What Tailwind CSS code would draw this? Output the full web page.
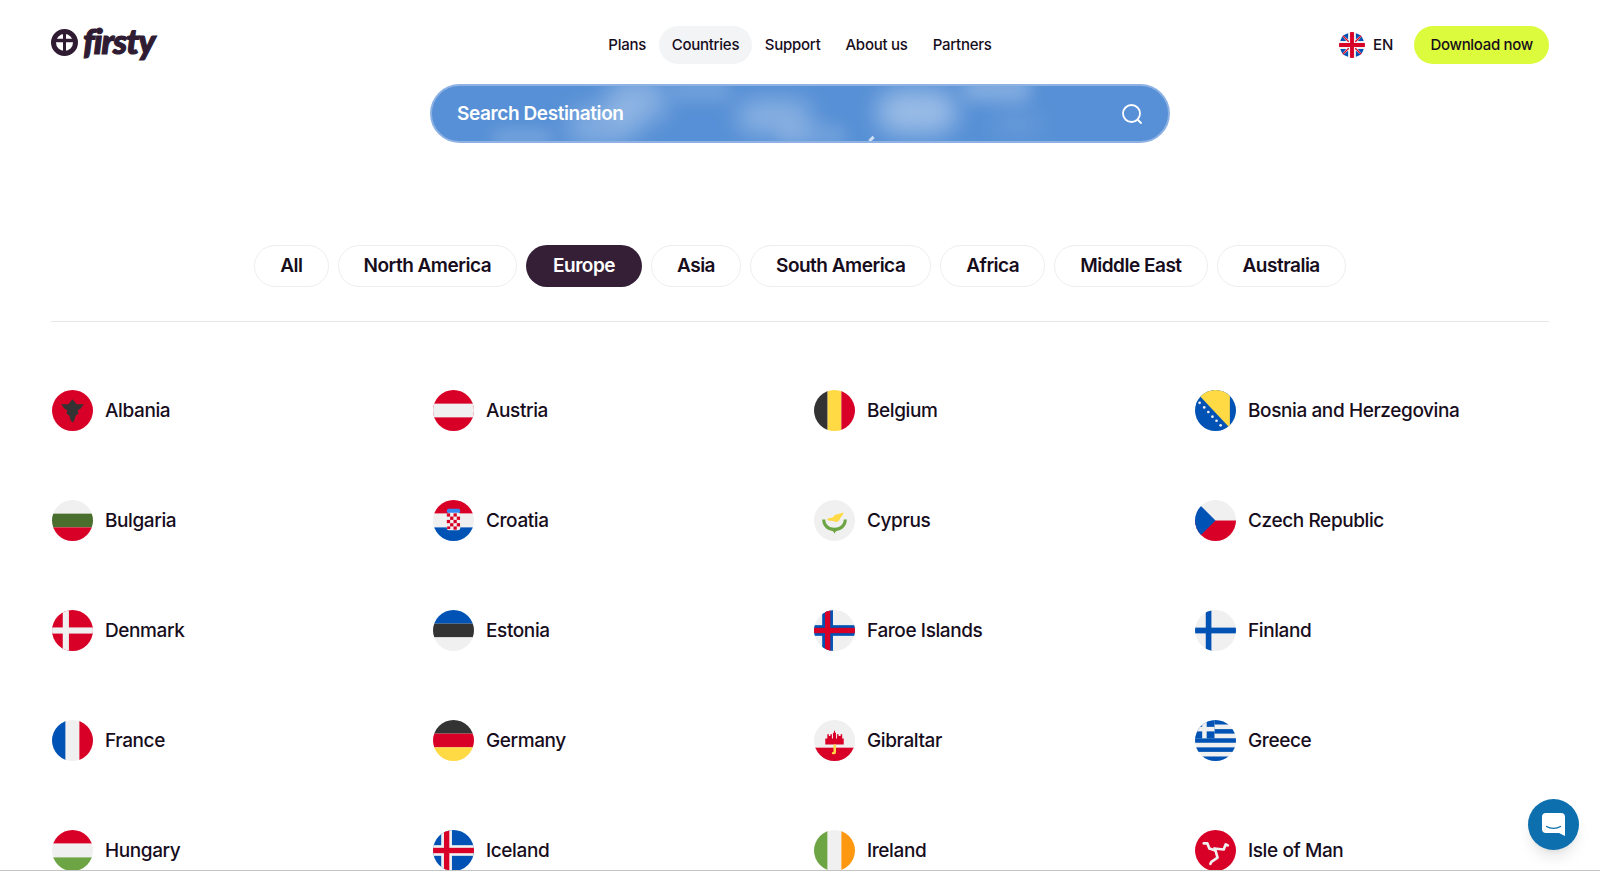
<!DOCTYPE html>
<html lang="en">
<head>
    <meta charset="UTF-8">
    <meta name="viewport" content="width=device-width, initial-scale=1.0">
    <title>Firsty - Countries</title>
    <script src="https://cdn.jsdelivr.net/npm/@tailwindcss/browser@4"></script>
</head>
<body class="bg-white h-[871px] overflow-hidden relative text-[#170d1c] font-['Inter',sans-serif]">
    <!-- Header -->
    <header class="grid grid-cols-[1fr_auto_1fr] items-start px-[51px] pt-[26px] h-[84px]">
        <a class="flex items-start gap-[5px] h-[34px] text-[#2f1c33]">
            <svg class="w-[27px] h-[27px] mt-[3px] shrink-0" viewBox="0 0 27 27" fill="none" stroke="currentColor">
                <circle cx="13.5" cy="13.5" r="11" stroke-width="5"/>
                <path d="M3 11.5h21" stroke-width="3.500"/>
                <path d="M13.5 3v21" stroke-width="3"/>
            </svg>
            <span class="font-['Lato',sans-serif] font-black italic text-[35px] leading-[28px] tracking-[-1px] [-webkit-text-stroke:1.2px_#2f1c33]">firsty</span>
        </a>
        <nav class="flex items-center text-[15px] font-medium tracking-[-0.25px]">
            <a class="flex items-center h-[38px] px-[12.5px]">Plans</a>
            <a class="flex items-center h-[38px] px-[13px] rounded-full bg-[#f3f4f6]">Countries</a>
            <a class="flex items-center h-[38px] px-[12.5px]">Support</a>
            <a class="flex items-center h-[38px] px-[12.5px]">About us</a>
            <a class="flex items-center h-[38px] px-[12.5px]">Partners</a>
        </nav>
        <div class="flex items-center justify-end h-[38px]">
            <svg class="w-[26px] h-[26px] rounded-full" viewBox="0 0 40 40">
                <rect width="40" height="40" fill="#f0f0f0"/>
                <path d="M14 2V11L6.500 5zM26 2V11L33.500 5zM2 14H11L5 6.500zM38 14H29L35 6.500zM14 38V29L6.500 35zM26 38V29L33.500 35zM2 26H11L5 33.500zM38 26H29L35 33.500z" fill="#0052b4"/>
                <path d="M5 5 15 15M35 5 25 15M5 35 15 25M35 35 25 25" stroke="#d80027" stroke-width="1.800"/>
                <path d="M17 0h6v17h17v6H23v17h-6V23H0v-6h17z" fill="#d80027"/>
            </svg>
            <span class="ml-[8px] text-[15px] font-medium">EN</span>
            <a class="flex items-center ml-[21px] h-[38px] px-[16px] rounded-full bg-[#dcfb3c] text-[15px] font-medium tracking-[-0.3px]">Download now</a>
        </div>
    </header>

    <!-- Search -->
    <div class="relative mx-auto w-[740px] h-[59px] rounded-full overflow-hidden bg-[#5790d6] border-2 border-[#8db2e3] flex items-center justify-between pl-[25px] pr-[25px]">
        <div class="absolute left-[135px] top-[20px] w-[70px] h-[40px] rounded-full bg-white/25 blur-md"></div>
        <div class="absolute left-[175px] top-[-8px] w-[60px] h-[45px] rounded-full bg-white/30 blur-md"></div>
        <div class="absolute left-[240px] top-[-8px] w-[60px] h-[24px] rounded-full bg-white/15 blur-sm"></div>
        <div class="absolute left-[305px] top-[14px] w-[75px] h-[34px] rounded-full bg-white/30 blur-md"></div>
        <div class="absolute left-[345px] top-[38px] w-[70px] h-[24px] rounded-full bg-white/15 blur-sm"></div>
        <div class="absolute left-[445px] top-[4px] w-[80px] h-[44px] rounded-full bg-white/40 blur-md"></div>
        <div class="absolute left-[530px] top-[-10px] w-[70px] h-[26px] rounded-full bg-white/25 blur-sm"></div>
        <div class="absolute left-[560px] top-[25px] w-[50px] h-[26px] rounded-full bg-white/10 blur-md"></div>
        <div class="absolute left-[60px] top-[44px] w-[60px] h-[16px] rounded-full bg-white/20 blur-sm"></div>
        <div class="absolute left-[438px] top-[50px] w-[3px] h-[6px] rotate-45 bg-white/70"></div>
        <span class="relative mt-[2px] text-white text-[19px] font-semibold tracking-[-0.4px]">Search Destination</span>
        <svg class="relative w-[22px] h-[22px]" viewBox="0 0 22 22" fill="none" stroke="white" stroke-width="1.800" stroke-linecap="round">
            <circle cx="10.500" cy="10.500" r="8.500"/>
            <path d="M17 17l3 3"/>
        </svg>
    </div>

    <!-- Region filter -->
    <div class="flex justify-center gap-[9px] mt-[102px] text-[19px] font-semibold tracking-[-0.5px]">
        <a class="flex items-center h-[42px] px-[25px] rounded-full border border-[#eeeeee]">All</a>
        <a class="flex items-center h-[42px] px-[25px] rounded-full border border-[#eeeeee]">North America</a>
        <a class="flex items-center h-[42px] px-[27px] rounded-full bg-[#341f36] text-white">Europe</a>
        <a class="flex items-center h-[42px] px-[25px] rounded-full border border-[#eeeeee]">Asia</a>
        <a class="flex items-center h-[42px] px-[25px] rounded-full border border-[#eeeeee]">South America</a>
        <a class="flex items-center h-[42px] px-[25px] rounded-full border border-[#eeeeee]">Africa</a>
        <a class="flex items-center h-[42px] px-[25px] rounded-full border border-[#eeeeee]">Middle East</a>
        <a class="flex items-center h-[42px] px-[25px] rounded-full border border-[#eeeeee]">Australia</a>
    </div>
    <div class="mx-[51px] mt-[34px] h-[1px] bg-[#e5e7eb]"></div>

    <!-- Countries -->
    <div class="grid grid-cols-4 gap-x-[26px] gap-y-[69px] pl-[51.5px] pr-[50.5px] mt-[68px] text-[19px] font-medium tracking-[-0.4px]">
        <a class="flex items-center gap-[12.5px]">
            <svg class="w-[41px] h-[41px] rounded-full shrink-0" viewBox="0 0 40 40">
                <rect width="40" height="40" fill="#d80027"/>
                <path d="M20 9 22.500 12 24 14 31 14 28 18 25 20 26 23 23 25 22 29 20 32 18 29 17 25 14 23 15 20 12 18 9 14 16 14 17.500 12z" fill="#333333"/>
            </svg>
            <span class="pt-[2px]">Albania</span>
        </a>
        <a class="flex items-center gap-[12.5px]">
            <svg class="w-[41px] h-[41px] rounded-full shrink-0" viewBox="0 0 40 40">
                <rect width="40" height="40" fill="#d80027"/>
                <rect y="13.300" width="40" height="13.400" fill="#f0f0f0"/>
            </svg>
            <span class="pt-[2px]">Austria</span>
        </a>
        <a class="flex items-center gap-[12.5px]">
            <svg class="w-[41px] h-[41px] rounded-full shrink-0" viewBox="0 0 40 40">
                <rect width="13.300" height="40" fill="#333333"/>
                <rect x="13.300" width="13.400" height="40" fill="#ffda44"/>
                <rect x="26.700" width="13.300" height="40" fill="#d80027"/>
            </svg>
            <span class="pt-[2px]">Belgium</span>
        </a>
        <a class="flex items-center gap-[12.5px]">
            <svg class="w-[41px] h-[41px] rounded-full shrink-0" viewBox="0 0 40 40">
                <rect width="40" height="40" fill="#0052b4"/>
                <path d="M4 5 6 0H34V37z" fill="#ffda44"/>
                <path d="M3 9 29 37 25 40 0 14z" fill="#0052b4"/>
                <g fill="#f0f0f0">
                    <circle cx="4.500" cy="12.500" r="1.300"/><circle cx="9" cy="17" r="1.300"/><circle cx="13" cy="21.500" r="1.300"/>
                    <circle cx="17" cy="26" r="1.300"/><circle cx="21" cy="30" r="1.300"/><circle cx="25" cy="34.500" r="1.300"/>
                </g>
            </svg>
            <span class="pt-[2px]">Bosnia and Herzegovina</span>
        </a>

        <a class="flex items-center gap-[12.5px]">
            <svg class="w-[41px] h-[41px] rounded-full shrink-0" viewBox="0 0 40 40">
                <rect width="40" height="13.300" fill="#f0f0f0"/>
                <rect y="13.300" width="40" height="13.400" fill="#496e2d"/>
                <rect y="26.700" width="40" height="13.300" fill="#d80027"/>
            </svg>
            <span class="pt-[2px]">Bulgaria</span>
        </a>
        <a class="flex items-center gap-[12.5px]">
            <svg class="w-[41px] h-[41px] rounded-full shrink-0" viewBox="0 0 40 40">
                <rect width="40" height="13.300" fill="#d80027"/>
                <rect y="13.300" width="40" height="13.400" fill="#f0f0f0"/>
                <rect y="26.700" width="40" height="13.300" fill="#0052b4"/>
                <rect x="13.500" y="8.500" width="13" height="4.500" rx="2" fill="#338af3"/>
                <rect x="13.500" y="12.500" width="13" height="17" rx="2" fill="#f0f0f0"/>
                <g fill="#d80027">
                    <rect x="13.500" y="13" width="3.200" height="3.200"/><rect x="20" y="13" width="3.200" height="3.200"/>
                    <rect x="16.700" y="16.200" width="3.200" height="3.200"/><rect x="23.200" y="16.200" width="3.200" height="3.200"/>
                    <rect x="13.500" y="19.400" width="3.200" height="3.200"/><rect x="20" y="19.400" width="3.200" height="3.200"/>
                    <rect x="16.700" y="22.600" width="3.200" height="3.200"/><rect x="23.200" y="22.600" width="3.200" height="3.200"/>
                    <rect x="13.800" y="25.800" width="3" height="2.500"/><rect x="20" y="25.800" width="3.200" height="3.200"/>
                </g>
            </svg>
            <span class="pt-[2px]">Croatia</span>
        </a>
        <a class="flex items-center gap-[12.5px]">
            <svg class="w-[41px] h-[41px] rounded-full shrink-0" viewBox="0 0 40 40">
                <rect width="40" height="40" fill="#f0f0f0"/>
                <path d="M13 19c0-2 5-1 6-3s5-2 10-4c-1 3-3 5-4 7s-3 3-5 2-6 0-7-2z" fill="#ffda44"/>
                <path d="M8 19c0 6 4 10 9 11l3 1 3-1c5-1 9-5 9-11h-3c0 5-4 8-9 8s-9-3-9-8z" fill="#6da544"/>
                <path d="M18 29h4l-2 4z" fill="#6da544"/>
            </svg>
            <span class="pt-[2px]">Cyprus</span>
        </a>
        <a class="flex items-center gap-[12.5px]">
            <svg class="w-[41px] h-[41px] rounded-full shrink-0" viewBox="0 0 40 40">
                <rect width="40" height="20" fill="#f0f0f0"/>
                <rect y="20" width="40" height="20" fill="#d80027"/>
                <path d="M5.800 5.800 20 20 5.800 34.200 0 30V10z" fill="#0052b4"/>
            </svg>
            <span class="pt-[2px]">Czech Republic</span>
        </a>

        <a class="flex items-center gap-[12.5px]">
            <svg class="w-[41px] h-[41px] rounded-full shrink-0" viewBox="0 0 40 40">
                <rect width="40" height="40" fill="#d80027"/>
                <rect x="10.500" width="6" height="40" fill="#f0f0f0"/>
                <rect y="17" width="40" height="6" fill="#f0f0f0"/>
            </svg>
            <span class="pt-[2px]">Denmark</span>
        </a>
        <a class="flex items-center gap-[12.5px]">
            <svg class="w-[41px] h-[41px] rounded-full shrink-0" viewBox="0 0 40 40">
                <rect width="40" height="13.300" fill="#0052b4"/>
                <rect y="13.300" width="40" height="13.400" fill="#333333"/>
                <rect y="26.700" width="40" height="13.300" fill="#f0f0f0"/>
            </svg>
            <span class="pt-[2px]">Estonia</span>
        </a>
        <a class="flex items-center gap-[12.5px]">
            <svg class="w-[41px] h-[41px] rounded-full shrink-0" viewBox="0 0 40 40">
                <rect width="40" height="40" fill="#f0f0f0"/>
                <rect x="8" width="10.500" height="40" fill="#0052b4"/>
                <rect y="14.800" width="40" height="10.400" fill="#0052b4"/>
                <rect x="10.700" width="5.200" height="40" fill="#d80027"/>
                <rect y="17.400" width="40" height="5.200" fill="#d80027"/>
            </svg>
            <span class="pt-[2px]">Faroe Islands</span>
        </a>
        <a class="flex items-center gap-[12.5px]">
            <svg class="w-[41px] h-[41px] rounded-full shrink-0" viewBox="0 0 40 40">
                <rect width="40" height="40" fill="#f0f0f0"/>
                <rect x="10.500" width="5.500" height="40" fill="#0052b4"/>
                <rect y="17.200" width="40" height="5.600" fill="#0052b4"/>
            </svg>
            <span class="pt-[2px]">Finland</span>
        </a>

        <a class="flex items-center gap-[12.5px]">
            <svg class="w-[41px] h-[41px] rounded-full shrink-0" viewBox="0 0 40 40">
                <rect width="13.300" height="40" fill="#0052b4"/>
                <rect x="13.300" width="13.400" height="40" fill="#f0f0f0"/>
                <rect x="26.700" width="13.300" height="40" fill="#d80027"/>
            </svg>
            <span class="pt-[2px]">France</span>
        </a>
        <a class="flex items-center gap-[12.5px]">
            <svg class="w-[41px] h-[41px] rounded-full shrink-0" viewBox="0 0 40 40">
                <rect width="40" height="13.300" fill="#333333"/>
                <rect y="13.300" width="40" height="13.400" fill="#d80027"/>
                <rect y="26.700" width="40" height="13.300" fill="#ffda44"/>
            </svg>
            <span class="pt-[2px]">Germany</span>
        </a>
        <a class="flex items-center gap-[12.5px]">
            <svg class="w-[41px] h-[41px] rounded-full shrink-0" viewBox="0 0 40 40">
                <rect width="40" height="40" fill="#f0f0f0"/>
                <rect y="27" width="40" height="13" fill="#d80027"/>
                <path d="M11 24v-6h2v-4h1.500v1.500h1.500V14h1.500v4h1V12.500h1v-2h1v2h1V18h1v-4h1.500v1.500H26V14h1.500v4h1.500v6z" fill="#d80027"/>
                <path d="M19 24h2.500v7.500c0 2-2.500 2.500-4 1.500v-1.800c1 .4 1.500.2 1.500-.5z" fill="#ffda44"/>
            </svg>
            <span class="pt-[2px]">Gibraltar</span>
        </a>
        <a class="flex items-center gap-[12.5px]">
            <svg class="w-[41px] h-[41px] rounded-full shrink-0" viewBox="0 0 40 40">
                <rect width="40" height="40" fill="#f0f0f0"/>
                <g fill="#0052b4">
                    <rect x="19" y="0" width="21" height="4.400"/>
                    <rect x="19" y="8.900" width="21" height="4.400"/>
                    <rect y="17.800" width="40" height="4.400"/>
                    <rect y="26.700" width="40" height="4.400"/>
                    <rect y="35.600" width="40" height="4.400"/>
                    <rect width="19" height="17.800"/>
                </g>
                <rect x="7" width="4.400" height="17.800" fill="#f0f0f0"/>
                <rect y="6.700" width="19" height="4.400" fill="#f0f0f0"/>
            </svg>
            <span class="pt-[2px]">Greece</span>
        </a>

        <a class="flex items-center gap-[12.5px]">
            <svg class="w-[41px] h-[41px] rounded-full shrink-0" viewBox="0 0 40 40">
                <rect width="40" height="13.300" fill="#d80027"/>
                <rect y="13.300" width="40" height="13.400" fill="#f0f0f0"/>
                <rect y="26.700" width="40" height="13.300" fill="#6da544"/>
            </svg>
            <span class="pt-[2px]">Hungary</span>
        </a>
        <a class="flex items-center gap-[12.5px]">
            <svg class="w-[41px] h-[41px] rounded-full shrink-0" viewBox="0 0 40 40">
                <rect width="40" height="40" fill="#0052b4"/>
                <rect x="8" width="10.500" height="40" fill="#f0f0f0"/>
                <rect y="14.800" width="40" height="10.400" fill="#f0f0f0"/>
                <rect x="10.700" width="5.200" height="40" fill="#d80027"/>
                <rect y="17.400" width="40" height="5.200" fill="#d80027"/>
            </svg>
            <span class="pt-[2px]">Iceland</span>
        </a>
        <a class="flex items-center gap-[12.5px]">
            <svg class="w-[41px] h-[41px] rounded-full shrink-0" viewBox="0 0 40 40">
                <rect width="13.300" height="40" fill="#6da544"/>
                <rect x="13.300" width="13.400" height="40" fill="#f0f0f0"/>
                <rect x="26.700" width="13.300" height="40" fill="#ff9811"/>
            </svg>
            <span class="pt-[2px]">Ireland</span>
        </a>
        <a class="flex items-center gap-[12.5px]">
            <svg class="w-[41px] h-[41px] rounded-full shrink-0" viewBox="0 0 40 40">
                <rect width="40" height="40" fill="#d80027"/>
                <g fill="none" stroke="#f0f0f0" stroke-width="2.600" stroke-linejoin="round" stroke-linecap="round">
                    <path d="M20 20 14 18 12 13 8.500 13"/>
                    <path d="M19 18 28 19 30 14 32 15"/>
                    <path d="M20 20 22 27 16 31 15 33"/>
                </g>
            </svg>
            <span class="pt-[2px]">Isle of Man</span>
        </a>
    </div>

    <!-- Chat launcher -->
    <button class="absolute left-[1528px] top-[799px] flex items-center justify-center w-[51px] h-[51px] rounded-full bg-[#0d6fad] shadow-lg">
        <svg class="w-[25px] h-[25px]" viewBox="0 0 25 25">
            <path d="M5 1h15a4 4 0 0 1 4 4v19l-6-3H5a4 4 0 0 1-4-4V5a4 4 0 0 1 4-4z" fill="white"/>
            <path d="M5.500 14.500c4 2.500 10 2.500 14 0" fill="none" stroke="#0d6fad" stroke-width="1.300" stroke-linecap="round"/>
        </svg>
    </button>
    <div class="absolute left-0 right-0 bottom-0 h-[1px] bg-[#c4c4c4]"></div>
</body>
</html>
